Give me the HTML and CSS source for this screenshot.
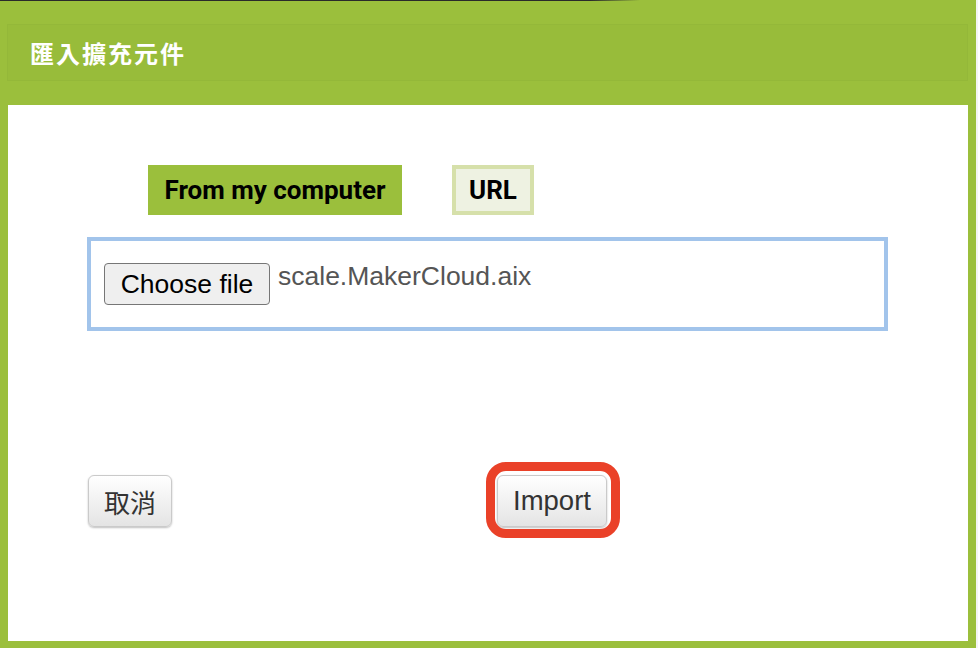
FILE: index.html
```html
<!DOCTYPE html>
<html lang="zh-Hant">
<head>
<meta charset="utf-8">
<title>匯入擴充元件</title>
<link rel="stylesheet" href="styles.css">
</head>
<body>
<div class="topline"></div>
<div class="dialog">
  <div class="header">
    <div class="title-box">匯入擴充元件</div>
  </div>
  <div class="content">
    <div class="tabs">
      <div class="tab tab-active">From my computer</div>
      <div class="tab tab-url">URL</div>
    </div>
    <div class="file-box">
      <button class="choose-btn">Choose file</button>
      <span class="file-name">scale.MakerCloud.aix</span>
    </div>
    <div class="actions">
      <button class="btn btn-cancel">取消</button>
      <div class="import-wrap">
        <button class="btn btn-import">Import</button>
        <div class="highlight"></div>
      </div>
    </div>
  </div>
</div>
</body>
</html>
```
FILE: styles.css
```css
html, body {
  margin: 0;
  padding: 0;
  background: #f4f4f4;
}
body {
  position: relative;
  width: 978px;
  height: 648px;
  overflow: hidden;
  font-family: "Liberation Sans", Arial, "Noto Sans CJK TC", sans-serif;
}
.topline {
  position: absolute;
  left: 0;
  top: 0;
  width: 640px;
  height: 1px;
  background: linear-gradient(to right, #2a2a2a 0, #2a2a2a 590px, rgba(42,42,42,0) 640px);
  z-index: 2;
}
.dialog {
  box-sizing: border-box;
  width: 976px;
  height: 648px;
  background: #9bbf3c;
  padding: 0 8px 7px 8px;
  display: flex;
  flex-direction: column;
}
.header {
  height: 105px;
  box-sizing: border-box;
  padding-top: 24px;
  flex-shrink: 0;
}
.title-box {
  box-sizing: border-box;
  margin-left: -1px;
  height: 57px;
  background: #98bc3a;
  border: 1px solid #94b839;
  padding-left: 22px;
  display: flex;
  align-items: center;
  color: #ffffff;
  font-family: "Noto Sans CJK TC", "Noto Sans CJK SC", sans-serif;
  font-weight: 700;
  font-size: 24px;
  letter-spacing: 2px;
}
.content {
  flex: 1;
  background: #ffffff;
  padding-top: 60px;
  box-sizing: border-box;
}
.tabs {
  display: flex;
  gap: 50px;
  padding-left: 140px;
}
.tab {
  box-sizing: border-box;
  height: 50px;
  display: flex;
  align-items: center;
  justify-content: center;
  font-family: Roboto, "Liberation Sans", sans-serif;
  font-weight: 700;
  font-size: 26px;
  color: #000;
}
.tab-active {
  width: 254px;
  background: #9bbf3c;
}
.tab-url {
  width: 82px;
  background: #eef2e2;
  border: 4px solid #d6e0aa;
}
.file-box {
  box-sizing: border-box;
  margin: 22px 0 0 79px;
  width: 801px;
  height: 94px;
  border: 4px solid #a2c4eb;
  padding: 22px 0 0 13px;
  display: flex;
  align-items: flex-start;
  gap: 8px;
}
.choose-btn {
  box-sizing: border-box;
  width: 166px;
  height: 42px;
  background: #efefef;
  border: 1px solid #767676;
  border-radius: 4px;
  font-family: "Liberation Sans", Arial, sans-serif;
  font-size: 26.5px;
  color: #000;
  padding: 0;
}
.file-name {
  font-size: 26.5px;
  color: #555555;
  line-height: 28px;
  margin-top: -1px;
}
.actions {
  display: flex;
  align-items: center;
  margin-top: 144px;
  padding-left: 80px;
}
.btn {
  box-sizing: border-box;
  height: 52px;
  border: 1px solid #cacaca;
  border-radius: 6px;
  background: linear-gradient(#ffffff, #e4e4e4);
  box-shadow: 0 1px 2px rgba(0,0,0,0.25);
  font-family: "Liberation Sans", Arial, "Noto Sans CJK TC", sans-serif;
  font-size: 26px;
  color: #333333;
  padding: 0;
}
.btn-cancel {
  width: 84px;
  font-weight: 400;
}
.import-wrap {
  position: relative;
  margin-left: 325px;
  display: flex;
}
.btn-import {
  width: 110px;
  font-size: 27.5px;
}
.highlight {
  position: absolute;
  left: -11px;
  top: -13px;
  right: -13px;
  bottom: -11px;
  border: 9px solid #ea4128;
  border-radius: 20px;
  pointer-events: none;
}
```
